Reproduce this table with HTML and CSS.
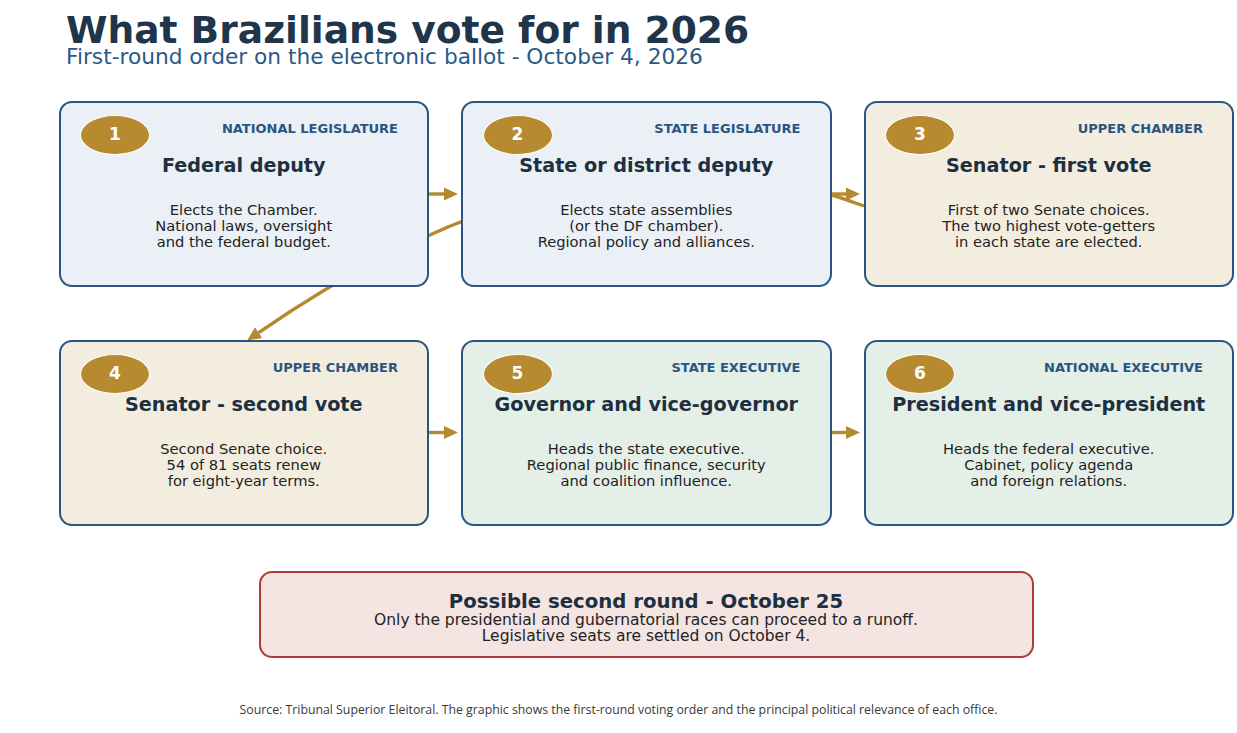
FILE: index.html
```html
<!DOCTYPE html>
<html lang="en">
<head>
<meta charset="utf-8">
<title>What Brazilians vote for in 2026</title>
<link rel="stylesheet" href="styles.css">
</head>
<body>
<div class="page">
  <svg class="connectors" width="1237" height="733" viewBox="0 0 1237 733" aria-hidden="true">
    <defs>
      <marker id="head" markerUnits="userSpaceOnUse" markerWidth="14" markerHeight="14" refX="0" refY="7" orient="auto">
        <path d="M0,0.5 L14,7 L0,13.5 Z" fill="#b5892f"/>
      </marker>
    </defs>
    <g stroke="#b5892f" stroke-width="3.4" fill="none">
      <path d="M864 206 Q 590.7 103.5 258.7 332.6" marker-end="url(#head)"/>
      <line x1="429" y1="194" x2="444" y2="194" marker-end="url(#head)"/>
      <line x1="831" y1="194" x2="846" y2="194" marker-end="url(#head)"/>
      <line x1="429" y1="432.5" x2="444" y2="432.5" marker-end="url(#head)"/>
      <line x1="831" y1="432.5" x2="846" y2="432.5" marker-end="url(#head)"/>
    </g>
  </svg>

  <header class="header">
    <h1 class="title">What Brazilians vote for in 2026</h1>
    <p class="subtitle">First-round order on the electronic ballot - October 4, 2026</p>
  </header>

  <main class="grid">
    <section class="card card-blue">
      <div class="card-top"><span class="badge">1</span><span class="category">NATIONAL LEGISLATURE</span></div>
      <h2 class="card-title">Federal deputy</h2>
      <p class="card-text">Elects the Chamber.<br>National laws, oversight<br>and the federal budget.</p>
    </section>
    <section class="card card-blue">
      <div class="card-top"><span class="badge">2</span><span class="category">STATE LEGISLATURE</span></div>
      <h2 class="card-title">State or district deputy</h2>
      <p class="card-text">Elects state assemblies<br>(or the DF chamber).<br>Regional policy and alliances.</p>
    </section>
    <section class="card card-beige">
      <div class="card-top"><span class="badge">3</span><span class="category">UPPER CHAMBER</span></div>
      <h2 class="card-title">Senator - first vote</h2>
      <p class="card-text">First of two Senate choices.<br>The two highest vote-getters<br>in each state are elected.</p>
    </section>
    <section class="card card-beige">
      <div class="card-top"><span class="badge">4</span><span class="category">UPPER CHAMBER</span></div>
      <h2 class="card-title">Senator - second vote</h2>
      <p class="card-text">Second Senate choice.<br>54 of 81 seats renew<br>for eight-year terms.</p>
    </section>
    <section class="card card-green">
      <div class="card-top"><span class="badge">5</span><span class="category">STATE EXECUTIVE</span></div>
      <h2 class="card-title">Governor and vice-governor</h2>
      <p class="card-text">Heads the state executive.<br>Regional public finance, security<br>and coalition influence.</p>
    </section>
    <section class="card card-green">
      <div class="card-top"><span class="badge">6</span><span class="category">NATIONAL EXECUTIVE</span></div>
      <h2 class="card-title">President and vice-president</h2>
      <p class="card-text">Heads the federal executive.<br>Cabinet, policy agenda<br>and foreign relations.</p>
    </section>
  </main>

  <div class="callout">
    <h2 class="callout-title">Possible second round - October 25</h2>
    <p class="callout-text">Only the presidential and gubernatorial races can proceed to a runoff.<br>Legislative seats are settled on October 4.</p>
  </div>

  <p class="source">Source: Tribunal Superior Eleitoral. The graphic shows the first-round voting order and the principal political relevance of each office.</p>
</div>
</body>
</html>
```

FILE: styles.css
```css
* {
  box-sizing: border-box;
}

html, body {
  margin: 0;
  padding: 0;
  background: #ffffff;
}

.page {
  position: relative;
  width: 1237px;
  height: 733px;
  overflow: hidden;
  font-family: "DejaVu Sans", "Liberation Sans", sans-serif;
  display: flex;
  flex-direction: column;
}

.connectors {
  position: absolute;
  left: 0;
  top: 0;
  z-index: 0;
}

.header {
  height: 101px;
  padding: 13.5px 0 0 66px;
}

.title {
  margin: 0;
  font-size: 37.6px;
  line-height: 33px;
  font-weight: bold;
  color: #203549;
}

.subtitle {
  margin: 0.5px 0 0 0;
  font-size: 21.7px;
  line-height: 20px;
  color: #285a88;
}

.grid {
  display: grid;
  grid-template-columns: repeat(3, 370.5px);
  grid-template-rows: 186px 186px;
  column-gap: 32px;
  row-gap: 53px;
  padding-left: 58.5px;
}

.card {
  position: relative;
  z-index: 1;
  border: 2px solid #2a5580;
  border-radius: 13px;
  text-align: center;
}

.card-blue { background: #eaf0f5; }
.card-beige { background: #f3ede0; }
.card-green { background: #e4efe7; }

.card-top {
  display: flex;
  justify-content: space-between;
  align-items: flex-start;
  padding: 12px 29px 0 19.5px;
}

.badge {
  display: flex;
  align-items: center;
  justify-content: center;
  width: 70px;
  height: 40px;
  border: 1.5px solid #ffffff;
  border-radius: 50%;
  background: #b78a30;
  color: #ffffff;
  font-weight: bold;
  font-size: 17px;
  line-height: 1;
  padding-bottom: 1px;
}

.category {
  margin-top: 6px;
  font-size: 13px;
  font-weight: bold;
  color: #2a5580;
}

.card-title {
  margin: -1.5px 0 0 0;
  font-size: 19.2px;
  font-weight: bold;
  color: #1e2f40;
}

.card-text {
  margin: 25.5px 0 0 0;
  font-size: 14.7px;
  line-height: 16.2px;
  color: #232323;
}

.callout {
  position: relative;
  z-index: 1;
  margin: 44.7px 0 0 258.5px;
  width: 775px;
  height: 87.6px;
  padding-top: 18.3px;
  border: 2px solid #b03c36;
  border-radius: 13px;
  background: #f4e4e2;
  text-align: center;
}

.callout-title {
  margin: 0;
  font-size: 19.7px;
  line-height: 21px;
  font-weight: bold;
  color: #1e2f40;
}

.callout-text {
  margin: 0;
  font-size: 15.5px;
  line-height: 16px;
  color: #232323;
}

.source {
  margin: 42.7px 0 0 0;
  font-family: "Open Sans", "Noto Sans", sans-serif;
  font-size: 12.3px;
  color: #3a3a3a;
  text-align: center;
}
```
